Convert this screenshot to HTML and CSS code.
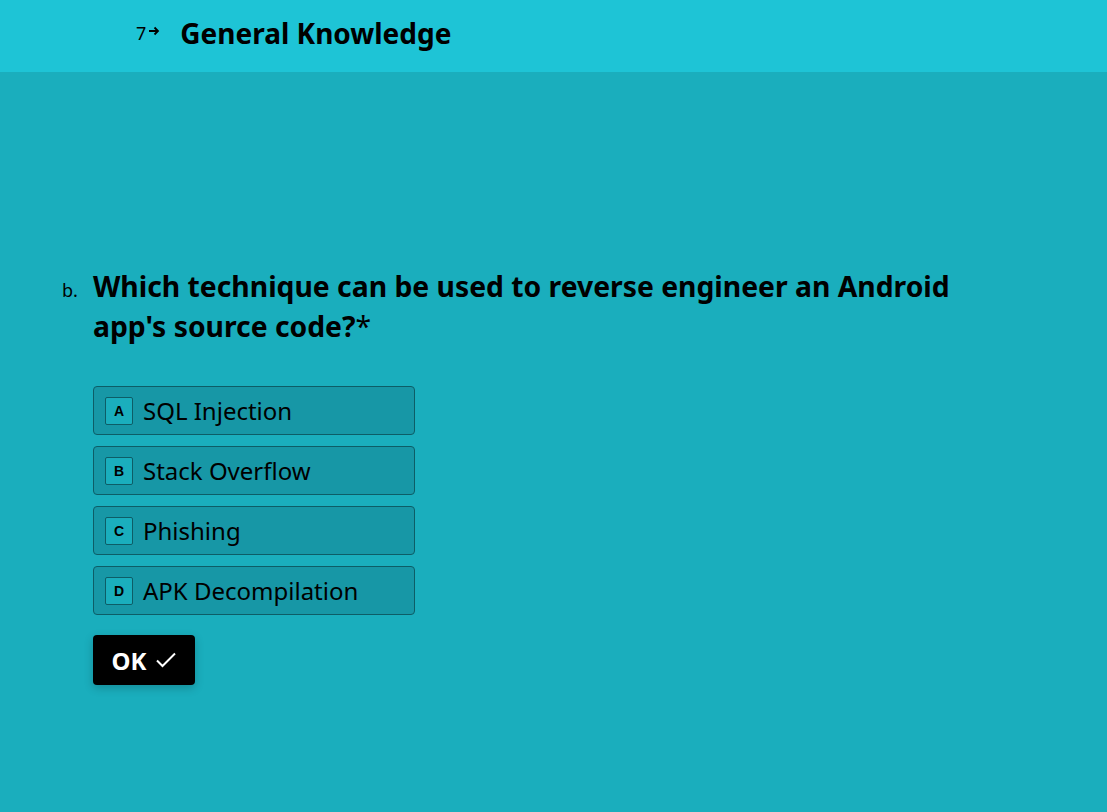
FILE: index.html
```html
<!DOCTYPE html>
<html>
<head>
<meta charset="utf-8">
<link rel="stylesheet" href="styles.css">
</head>
<body>
<header class="topbar">
  <span class="num">7</span>
  <svg class="arrow" width="12" height="12" viewBox="0 0 12 12"><path d="M1 6h9M6.5 2.5 10 6l-3.5 3.5" fill="none" stroke="#000" stroke-width="1.8"/></svg>
  <h1 class="title">General Knowledge</h1>
</header>
<main class="content">
  <div class="question">
    <span class="qlabel">b.</span>
    <div class="qbody">
      <h2 class="qtext">Which technique can be used to reverse engineer an Android app's source code?<span class="req">*</span></h2>
      <div class="options">
        <div class="option"><span class="key">A</span><span class="otext">SQL Injection</span></div>
        <div class="option"><span class="key">B</span><span class="otext">Stack Overflow</span></div>
        <div class="option"><span class="key">C</span><span class="otext">Phishing</span></div>
        <div class="option"><span class="key">D</span><span class="otext">APK Decompilation</span></div>
      </div>
      <button class="ok">OK <svg width="24" height="24" viewBox="0 0 24 24"><path d="M3 12.5l5.5 5.5L21 5.5" fill="none" stroke="#fff" stroke-width="2"/></svg></button>
    </div>
  </div>
</main>
</body>
</html>
```
FILE: styles.css
```css
* { box-sizing: border-box; }
html, body { margin: 0; height: 100%; }
body {
  font-family: "Noto Sans", sans-serif;
  background: #1aaebd;
  color: #000;
}
.topbar {
  height: 72px;
  background: #1ec4d6;
  display: flex;
  align-items: center;
  padding-left: 136px;
  padding-bottom: 6px;
}
.num { font-size: 18px; margin-right: 2px; margin-top: 0; }
.arrow { margin-top: -4px; margin-right: 20px; }
.title { font-size: 28px; font-weight: 700; margin: 0; }
.content { padding-top: 194px; padding-left: 62px; }
.question { display: flex; }
.qlabel { font-size: 18px; width: 31px; padding-top: 12px; }
.qbody { width: 890px; }
.qtext { font-size: 28.3px; font-weight: 700; line-height: 40px; margin: 0 0 40px; }
.req { font-weight: 400; }
.options { display: flex; flex-direction: column; gap: 11px; }
.option {
  width: 322px; height: 49px;
  background: #1797a6;
  border: 1px solid #0d5d67;
  border-radius: 4px;
  display: flex; align-items: center;
  padding-left: 11px;
}
.key {
  width: 28px; height: 28px;
  border: 1px solid #0d5d67;
  border-radius: 2px;
  background: #1aaebd;
  font-family: "Liberation Sans", Arial, sans-serif;
  font-size: 14px; font-weight: 700;
  display: flex; align-items: center; justify-content: center;
  margin-right: 10px;
}
.otext { font-size: 24px; }
.ok {
  margin-top: 20px;
  width: 102px; height: 50px;
  background: #000; color: #fff;
  border: none; border-radius: 4px;
  font-family: inherit; font-size: 24px; font-weight: 700;
  display: flex; align-items: center; justify-content: center; gap: 8px;
  padding-left: 8px;
  box-shadow: 0 3px 10px rgba(0,0,0,0.2);
}
```
